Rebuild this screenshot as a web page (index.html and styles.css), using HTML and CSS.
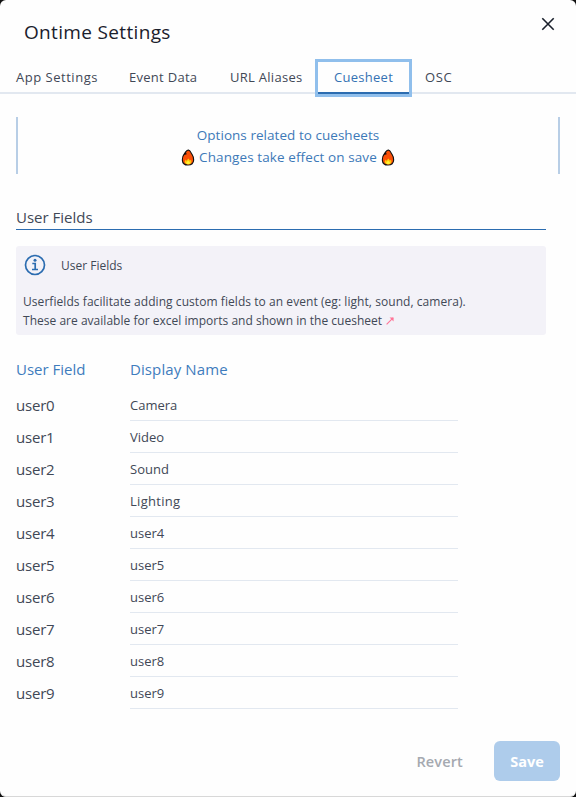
FILE: index.html
```html
<!DOCTYPE html>
<html lang="en">
<head>
<meta charset="utf-8">
<title>Ontime Settings</title>
<link rel="stylesheet" href="styles.css">
</head>
<body>
<main class="modal">
  <header class="modal-header">
    <h1 class="title">Ontime Settings</h1>
    <button class="close" aria-label="Close"><svg width="14" height="14" viewBox="0 0 14 14"><path d="M1.3 1.3l11.4 11.4M12.7 1.3L1.3 12.7" stroke="#1a202c" stroke-width="1.6" fill="none"/></svg></button>
  </header>
  <nav class="tabs">
    <a class="tab tab-app"><span>App Settings</span></a>
    <a class="tab tab-event"><span>Event Data</span></a>
    <a class="tab tab-url"><span>URL Aliases</span></a>
    <a class="tab tab-cue active"><span>Cuesheet</span></a>
    <a class="tab tab-osc"><span>OSC</span></a>
  </nav>
  <section class="notice">
    <div class="notice-first">Options related to cuesheets</div>
    <div class="notice-row">
      <svg class="flame" viewBox="0 0 14 18"><path d="M7.500 1C5.200 1.200 5 3 3.600 4.300C1.600 6.800 .9 9 1 11.500C1.200 15 3.600 17 7 17s5.800-2 6-5.300C13.200 9 12.200 7 11.200 5.500C10 4.600 10 1.500 7.500 1Z" fill="#fa4f08" stroke="#111" stroke-width="1.200"/><path d="M4.500 2.500L2.300 6.500L5.600 5.500Z" fill="#111"/><path d="M3.500 13.500L4.500 11.200L5.500 12.500L7.300 10L9 12.300L10.300 11.500L10.700 13.500Q10.300 16.200 7 16.300Q3.800 16 3.500 13.500Z" fill="#ffc80a"/><path d="M5 14.500L7.200 12.500L9.200 14.500Q9 16 7 16Q5 16 5 14.500Z" fill="#fff335"/></svg>
      <span class="notice-text">Changes take effect on save</span>
      <svg class="flame" viewBox="0 0 14 18"><path d="M7.500 1C5.200 1.200 5 3 3.600 4.300C1.600 6.800 .9 9 1 11.500C1.200 15 3.600 17 7 17s5.800-2 6-5.300C13.200 9 12.200 7 11.200 5.500C10 4.600 10 1.500 7.500 1Z" fill="#fa4f08" stroke="#111" stroke-width="1.200"/><path d="M4.500 2.500L2.300 6.500L5.600 5.500Z" fill="#111"/><path d="M3.500 13.500L4.500 11.200L5.500 12.500L7.300 10L9 12.300L10.300 11.500L10.700 13.500Q10.300 16.200 7 16.300Q3.800 16 3.500 13.500Z" fill="#ffc80a"/><path d="M5 14.500L7.200 12.500L9.200 14.500Q9 16 7 16Q5 16 5 14.500Z" fill="#fff335"/></svg>
    </div>
  </section>
  <h2 class="section-title"><span>User Fields</span></h2>
  <section class="info">
    <div class="info-head">
      <svg width="22" height="22" viewBox="0 0 22 22" fill="none" stroke="#2b6cb0"><circle cx="11" cy="11" r="9.500" stroke-width="1.700"/><path d="M8.300 9.500H11.200V15.300M8 15.500H14" stroke-width="1.700"/><circle cx="11" cy="6.300" r="1.500" fill="#2b6cb0" stroke="none"/></svg>
      <span class="info-title">User Fields</span>
    </div>
    <p class="info-text"><span class="line-one">Userfields facilitate adding custom fields to an event (eg: light, sound, camera).</span><br><span class="line-two">These are available for excel imports and shown in the cuesheet</span><svg class="external" viewBox="0 0 9 9"><path d="M.7 8.300L8 1" fill="none" stroke="#ff7597" stroke-width="1.300"/><path d="M4 .5H8.500V5Z" fill="#ff7597"/></svg></p>
  </section>
  <section class="fields">
    <div class="row head"><span class="key-head">User Field</span><span class="name-head">Display Name</span></div>
    <div class="row"><span class="key">user0</span><span class="value">Camera</span></div>
    <div class="row"><span class="key">user1</span><span class="value">Video</span></div>
    <div class="row"><span class="key">user2</span><span class="value">Sound</span></div>
    <div class="row"><span class="key">user3</span><span class="value wide">Lighting</span></div>
    <div class="row"><span class="key">user4</span><span class="value">user4</span></div>
    <div class="row"><span class="key">user5</span><span class="value">user5</span></div>
    <div class="row"><span class="key">user6</span><span class="value">user6</span></div>
    <div class="row"><span class="key">user7</span><span class="value">user7</span></div>
    <div class="row"><span class="key">user8</span><span class="value">user8</span></div>
    <div class="row"><span class="key">user9</span><span class="value">user9</span></div>
  </section>
  <footer class="actions"><button class="revert">Revert</button><button class="save">Save</button></footer>
</main>
</body>
</html>
```
FILE: styles.css
```css
* { box-sizing: border-box; }
body { margin: 0; background: #111; font-family: "Open Sans", "Noto Sans", sans-serif; color: #414856; }
button { border: 0; padding: 0; background: none; font-family: inherit; }
h1, h2, p { margin: 0; font-weight: 400; }
.modal { width: 576px; height: 797px; background: #fefefe; border-radius: 6px; border-bottom: 1px solid #d8d8d8; overflow: hidden; }
.modal-header { height: 62px; display: flex; justify-content: space-between; padding: 17px 21px 0 24px; }
.title { font-size: 19px; line-height: 30px; letter-spacing: .34px; color: #1a202c; white-space: nowrap; }
.close { width: 14px; height: 14px; display: flex; }
.tabs { height: 32px; display: flex; border-bottom: 2px solid #e2e8f0; }
.tab { height: 32px; padding-left: 16px; font-size: 13px; line-height: 30px; white-space: nowrap; letter-spacing: .28px; }
.tab-app { width: 113px; letter-spacing: .52px; }
.tab-event { width: 101px; }
.tab-url { width: 104px; }
.tab-cue { width: 91px; }
.tab-osc { width: 60px; letter-spacing: .6px; }
.tab.active { color: #3572b3; border-bottom: 2px solid #2b6cb0; box-shadow: 0 0 0 3px #90bfec; }
.notice { margin: 23px 16px 0; height: 57px; padding-top: 7px; border: solid #b8cee6; border-width: 0 2px; color: #3d79b8; font-size: 13.500px; line-height: 22px; text-align: center; white-space: nowrap; }
.notice-first { letter-spacing: .04px; }
.notice-text { letter-spacing: .1px; }
.notice-row { display: flex; justify-content: center; align-items: center; gap: 4px; }
.flame { width: 14px; height: 17px; }
.section-title { margin: 31px 30px 0 16px; height: 25px; border-bottom: 1px solid #2b6cb0; font-size: 15px; line-height: 25px; color: #414856; }
.info { margin: 16px 30px 0 16px; height: 89px; padding: 8px 7px; border-radius: 3px; background: #f3f2f8; font-size: 12px; }
.info-head { display: flex; height: 22px; align-items: center; gap: 15px; padding-left: 1px; }
.info-text { margin-top: 16px; line-height: 19px; white-space: nowrap; }
.line-one { letter-spacing: .06px; }
.line-two { letter-spacing: .02px; }
.external { width: 8px; height: 8px; margin-left: 4px; }
.fields { margin: 18px 118px 0 16px; }
.row { height: 32px; display: grid; grid-template-columns: 114px 328px; line-height: 33px; white-space: nowrap; }
.row.head { height: 36px; line-height: 32px; font-size: 15px; color: #3f7cbd; }
.name-head { letter-spacing: .1px; }
.key { font-size: 15px; letter-spacing: -.2px; }
.value { height: 32px; border-bottom: 1px solid #e2e8f0; font-size: 13px; line-height: 32px; }
.value.wide { letter-spacing: .3px; }
.actions { margin-top: 32px; height: 40px; padding-right: 16px; display: flex; justify-content: flex-end; gap: 31px; }
.revert { color: #a5a9b0; font-size: 14.500px; font-weight: 600; letter-spacing: .15px; }
.save { width: 66px; border-radius: 6px; background: #aecceb; color: #fff; font-size: 14.500px; font-weight: 700; }
```
